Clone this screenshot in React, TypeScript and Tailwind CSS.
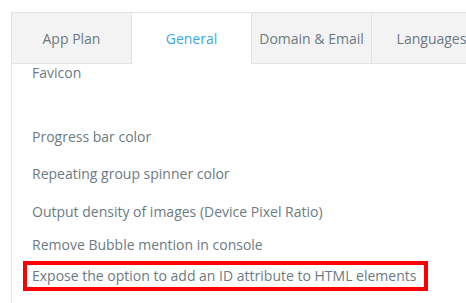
const tabs = [
  { label: "App Plan", active: false },
  { label: "General", active: true },
  { label: "Domain & Email", active: false },
  { label: "Languages", active: false },
];

export default function App() {
  return (
    <div
      className="h-[303px] w-[466px] overflow-hidden bg-white pl-[11px] pt-[12px] text-[14px] text-[#6c7a83]"
      style={{ fontFamily: '"Open Sans", "Noto Sans", sans-serif' }}
    >
      <div className="h-[300px] w-[600px] border-l border-[#e1e3e4]">
        <div className="flex">
          {tabs.map((t) => (
            <div
              key={t.label}
              className={
                t.active
                  ? "flex h-[52px] w-[120px] shrink-0 items-center justify-center border-r border-t border-[#e1e3e4] bg-white text-[#3aa7df]"
                  : "flex h-[52px] w-[120px] shrink-0 items-center justify-center border-b border-r border-t border-[#e1e3e4] bg-[#f3f3f3]"
              }
            >
              {t.label}
            </div>
          ))}
        </div>
        <div className="flex flex-col">
          <div className="pl-[20px] leading-[18px]">Favicon</div>
          <div className="mt-[46px] pl-[20px] leading-[18px]">Progress bar color</div>
          <div className="mt-[19px] pl-[20px] leading-[18px]">Repeating group spinner color</div>
          <div className="mt-[20px] pl-[20px] leading-[18px]">Output density of images (Device Pixel Ratio)</div>
          <div className="mt-[15px] pl-[20px] leading-[18px]">Remove Bubble mention in console</div>
          <div className="ml-[11px] mt-[7px] flex h-[30px] w-[405px] items-center border-4 border-[#ff0000] pl-[5px] leading-[18px]">
            Expose the option to add an ID attribute to HTML elements
          </div>
        </div>
      </div>
    </div>
  );
}
